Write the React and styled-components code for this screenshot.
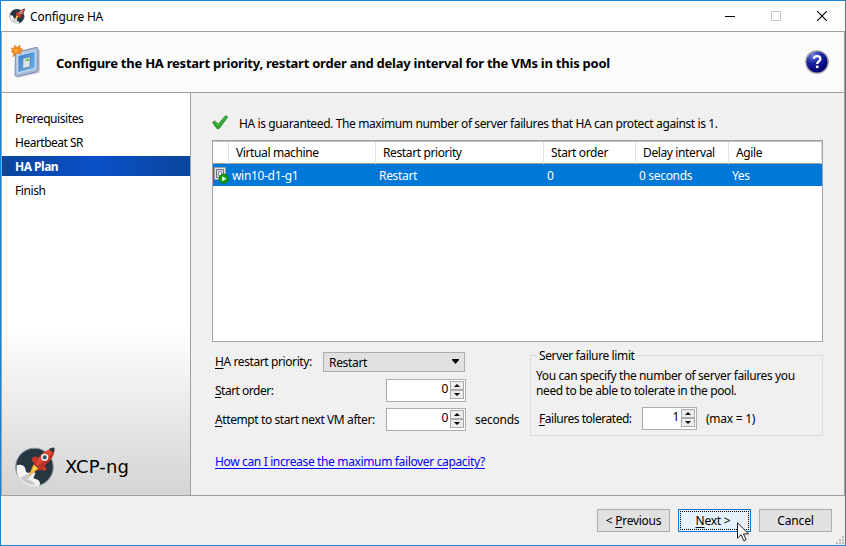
import React from 'react';
import styled, { createGlobalStyle } from 'styled-components';

const GlobalStyle = createGlobalStyle`
  *, *::before, *::after { box-sizing: border-box; }
  body { margin: 0; overflow: hidden; }
`;

const Window = styled.div`
  position: relative;
  display: flex;
  flex-direction: column;
  width: 846px;
  height: 546px;
  border: 1px solid #1883d7;
  background: #f0f0f0;
  color: #000;
  font: 12px/15px "Noto Sans", "Open Sans", sans-serif;
  letter-spacing: -0.385px;
  white-space: nowrap;
`;

const TitleBar = styled.header`
  display: flex;
  align-items: center;
  height: 30px;
  padding-left: 8px;
  background: #fff;
`;

const TitleText = styled.span`
  flex: 1;
  margin-left: 5px;
  letter-spacing: -0.2px;
`;

const WindowButton = styled.span`
  display: flex;
  align-items: center;
  justify-content: center;
  width: 46px;
  height: 28px;
`;

const Frame = styled.div`
  display: flex;
  flex-direction: column;
  width: 844px;
  height: 465px;
  border: 1px solid #a0a0a0;
`;

const Banner = styled.div`
  display: flex;
  align-items: center;
  height: 61px;
  padding: 0 15px 0 9px;
  border-bottom: 1px solid #a0a0a0;
  background: #fbfbfb;
`;

const Heading = styled.h1`
  flex: 1;
  margin: 2px 0 0 12px;
  font-size: 13px;
  font-weight: 700;
  letter-spacing: -0.235px;
`;

const Columns = styled.div`
  display: flex;
  flex: 1;
  min-height: 0;
`;

const Sidebar = styled.nav`
  display: flex;
  flex-direction: column;
  width: 189px;
  padding-top: 15px;
  border-right: 1px solid #a0a0a0;
  background: linear-gradient(#fff 58%, #d4d4d4);
`;

const Step = styled.div`
  height: 20px;
  margin-bottom: 4px;
  padding-left: 13px;
  line-height: 21px;
  letter-spacing: ${(p) => p.$spacing || '-0.42px'};
  font-weight: ${(p) => (p.$active ? 700 : 400)};
  color: ${(p) => (p.$active ? '#fff' : '#000')};
  background: ${(p) =>
    p.$active ? 'linear-gradient(90deg, #0a469d, #0a50c8 50%, #0a469d)' : 'none'};
`;

const Brand = styled.div`
  display: flex;
  align-items: center;
  gap: 10px;
  margin: auto 0 8px 12px;
  font: 18px/24px "DejaVu Sans", sans-serif;
  letter-spacing: 0.1px;
`;

const Main = styled.main`
  flex: 1;
  padding: 21px 20px 0 21px;
`;

const Status = styled.div`
  display: flex;
  align-items: center;
  height: 18px;
  gap: 11px;
  margin-bottom: 8px;
`;

const Table = styled.div`
  width: 611px;
  height: 202px;
  border: 1px solid #a0a3ab;
  border-top-color: #a0a0a0;
  background: #fff;
`;

const TableRow = styled.div`
  display: grid;
  grid-template-columns: 16px 147px 168px 92px 93px 1fr;
`;

const HeadRow = styled(TableRow)`
  height: 23px;
  border-top: 1px solid #c0c0c0;
  border-bottom: 1px solid #a0a0a0;
`;

const HeadCell = styled.div`
  padding-left: 7px;
  border-right: 1px solid #e2e2e2;
  line-height: 22px;
  letter-spacing: -0.38px;
`;

const SelectedRow = styled(TableRow)`
  height: 22px;
  background: #0078d7;
  color: #fff;
`;

const Cell = styled.div`
  display: flex;
  align-items: center;
  padding: ${(p) => (p.$icon ? '0' : '1px 0 0 3px')};
  letter-spacing: -0.32px;
`;

const Controls = styled.div`
  display: flex;
  justify-content: space-between;
  width: 611px;
`;

const Form = styled.div`
  display: flex;
  flex-direction: column;
  padding: 5px 0 0 3px;
`;

const Field = styled.div`
  display: flex;
  align-items: center;
  height: 29px;
`;

const Label = styled.label`
  width: ${(p) => p.$width};
  letter-spacing: ${(p) => p.$spacing || '-0.4px'};
`;

const Key = styled.span`
  text-decoration: underline;
  text-underline-offset: 2px;
`;

const Combo = styled.div`
  display: flex;
  align-items: center;
  justify-content: space-between;
  width: 142px;
  height: 20px;
  padding: 1px 5px 0 5px;
  border: 1px solid #adadad;
  background: #e1e1e1;
  letter-spacing: -0.32px;
`;

const DropArrow = styled.svg`
  margin-top: -2px;
`;

const NumberBox = styled.div`
  display: flex;
  justify-content: flex-end;
  width: ${(p) => p.$width}px;
  height: 23px;
  padding: 1px;
  border: 1px solid #abadb3;
  background: #fff;
`;

const Value = styled.span`
  margin-right: 2px;
  line-height: 15px;
`;

const Spin = styled.span`
  display: grid;
  grid-template-rows: 9px 9px;
  width: 14px;
  height: 18px;
  background: #f0f0f0;
`;

const SpinButton = styled.span`
  display: flex;
  align-items: center;
  justify-content: center;
  border: 1px solid #acacac;
  background: #ececec;
`;

const Unit = styled.span`
  margin-left: 9px;
  letter-spacing: -0.25px;
`;

const Link = styled.a`
  align-self: flex-start;
  margin: 20px 0 0;
  color: #00f;
  text-decoration: underline;
  text-underline-offset: 2px;
  letter-spacing: -0.355px;
`;

const Group = styled.fieldset`
  width: 293px;
  height: 88px;
  min-width: 0;
  margin: 6px 0 0;
  padding: 5px 0 0 5px;
  border: 1px solid #dcdcdc;
`;

const Legend = styled.legend`
  margin-left: 1px;
  padding: 0 2px;
  letter-spacing: -0.38px;
`;

const GroupText = styled.p`
  width: 268px;
  margin: 0 0 9px;
  letter-spacing: -0.385px;
  white-space: normal;
`;

const GroupField = styled.div`
  display: flex;
  align-items: center;
  padding-left: 3px;
`;

const Footer = styled.footer`
  position: relative;
  display: flex;
  justify-content: flex-end;
  gap: 8px;
  flex: 1;
  padding: 13px 13px 0 0;
`;

const Button = styled.button`
  width: 73px;
  height: 23px;
  padding: 0;
  border: 1px solid ${(p) => (p.$focused ? '#0078d7' : '#adadad')};
  outline: ${(p) => (p.$focused ? '1px dotted #000' : 'none')};
  outline-offset: -3px;
  background: ${(p) => (p.$focused ? '#e5f1fb' : '#e1e1e1')};
  color: #000;
  font: inherit;
  letter-spacing: ${(p) => p.$spacing};
  text-indent: ${(p) => (p.$focused ? '-3px' : '0')};
`;

const Pointer = styled.svg`
  position: absolute;
  left: 736px;
  top: 521px;
`;

const Grip = styled.svg`
  position: absolute;
  right: 1px;
  bottom: 1px;
`;

function Rocket({ size }) {
  return (
    <svg width={size} height={size} viewBox="0 0 40 40">
      <circle cx="20" cy="20.500" r="18.300" fill="#263740" stroke="#87919a" strokeWidth="1" />
      <path d="M2.500 19c3-1.500 8 0 8.500 3 .5 2 0 3 2 4 2 .5 5-1 8 0l-2 5c2 2 5 1 6 4 1 2 0 3-1 4-9 2-19-3-21-12-.5-3-.5-6-.5-8z" fill="#f3f3f3" />
      <path d="M6 31l15-7-8 9c4 0 6 2 8 5-7 0-12-3-15-7z" fill="#c9c9cb" />
      <path d="M19 22c0-4 0-9 4-11l4 3zM22 24c4 0 6 0 9-4l-4-4z" fill="#b93227" />
      <path d="M18 11l4-1 .5 3-3 3-2-1zM27 22l3-2 2 3-3 1.500z" fill="#c93b2c" />
      <path d="M19 18l5 4-10 8z" fill="#f5b433" />
      <path d="M20 19l2.500 2.500-5 4z" fill="#ffdc62" />
      <path d="M21 17c3-7 7-12 17-15 1.500 0 1.500 1 1.500 3-2 9-8 13-15.500 17z" fill="#dc4637" />
      <path d="M24 22c7.500-4 13-8 15-16L22.500 20z" fill="#b93228" />
      <path d="M34 3l4-1.500c1 0 1.500.5 1.500 1.500l-1 4z" fill="#263740" />
      <circle cx="30" cy="11" r="2.800" fill="#2d5969" stroke="#f3f3f3" strokeWidth="1.500" />
    </svg>
  );
}

function BannerIcon() {
  return (
    <svg width="33" height="36" viewBox="0 0 33 36">
      <defs>
        <linearGradient id="screen" x2="1" y2="1">
          <stop stopColor="#2f7fd0" />
          <stop offset="1" stopColor="#74b4ea" />
        </linearGradient>
        <linearGradient id="bezel" x2="1" y2="1">
          <stop stopColor="#bccde4" />
          <stop offset="1" stopColor="#a2b5d2" />
        </linearGradient>
      </defs>
      <path d="M6 33l22-5V6" fill="none" stroke="#d0d0d6" strokeWidth="2" />
      <path d="M4.500 8.500L25 3.500q2-.5 2 1.500v20.500q0 2-2 2.500L5.500 32.500q-1.500 0-1.500-2z" fill="url(#bezel)" stroke="#6e82a8" strokeWidth=".9" />
      <path d="M7 11.500L24.200 7.200v17.300L6.800 28.700z" fill="url(#screen)" stroke="#e4eefa" strokeWidth=".8" />
      <path d="M12 14.500l7-1.800v10l-7.200 1.800z" fill="#dde3ea" stroke="#6d7f98" strokeWidth=".7" />
      <path d="M14.500 15.500l3.500-1v2l-3.500 1z" fill="#58c04b" />
      <path d="M0 4l3 .5L3.500 1 6 3.500 9 1v3.500l3 .5-2.500 2 .5 3-4-1-4 4 .5-4.500L0 7.500 2 6z" fill="#f28a1b" stroke="#e07314" strokeWidth=".6" />
      <path d="M3 5.500l4-.5-1 2.500L4 9z" fill="#ffb53c" />
    </svg>
  );
}

function HelpIcon() {
  return (
    <svg width="24" height="24" viewBox="0 0 24 24">
      <defs>
        <radialGradient id="ball" cx=".3" cy=".15" r=".85">
          <stop stopColor="#7185dc" />
          <stop offset=".5" stopColor="#1720a0" />
          <stop offset="1" stopColor="#00006e" />
        </radialGradient>
      </defs>
      <circle cx="12" cy="12" r="11.200" fill="url(#ball)" stroke="#a2a2a2" strokeWidth="1.300" />
      <path d="M8.800 8.800c.2-2 1.500-2.600 3.300-2.600 2 0 3.300 1 3.300 2.800 0 2.300-3.200 2.300-3.200 5" fill="none" stroke="#fff" strokeWidth="2.300" />
      <path d="M10.900 15.600h2.600v2.400h-2.600z" fill="#fff" />
    </svg>
  );
}

function CheckIcon() {
  return (
    <svg width="16" height="16" viewBox="0 0 16 16">
      <path d="M.5 7.500L3 5.800l3.200 3.500L13.500.8l2.200 1.200L7.200 13.500l-2 .2z" fill="#2fa12f" stroke="#1c831f" strokeWidth=".8" />
      <path d="M2 7.300l1-.6 3.200 4L14 1.800" fill="none" stroke="#63c75c" strokeWidth=".8" />
    </svg>
  );
}

function VmIcon() {
  return (
    <svg width="16" height="18" viewBox="0 0 16 18">
      <path d="M1.500 1.500h11v12h-11z" fill="#e1e4e9" stroke="#9a9ea8" />
      <path d="M3.500 3.500h7v8h-7z" fill="#d3d8de" stroke="#6b717c" />
      <path d="M5.500 5.500h3v4h-3z" fill="#eef0f2" stroke="#8a909a" />
      <circle cx="10.700" cy="12.700" r="4.600" fill="#12a012" stroke="#087c08" />
      <path d="M9.200 10.200l4 2.500-4 2.500z" fill="#fff" />
    </svg>
  );
}

function NumberInput({ value, width }) {
  return (
    <NumberBox $width={width}>
      <Value>{value}</Value>
      <Spin>
        <SpinButton>
          <svg width="6" height="3" viewBox="0 0 6 3"><path d="M3 0L6 3H0z" /></svg>
        </SpinButton>
        <SpinButton>
          <svg width="6" height="3" viewBox="0 0 6 3"><path d="M3 3L6 0H0z" /></svg>
        </SpinButton>
      </Spin>
    </NumberBox>
  );
}

export default function App() {
  return (
    <Window>
      <GlobalStyle />
      <TitleBar>
        <Rocket size={16} />
        <TitleText>Configure HA</TitleText>
        <WindowButton>
          <svg width="10" height="10"><path d="M0 5.500h10" stroke="#000" /></svg>
        </WindowButton>
        <WindowButton>
          <svg width="10" height="10"><path d="M.5.5h9v9h-9z" fill="none" stroke="#c8c8c8" /></svg>
        </WindowButton>
        <WindowButton>
          <svg width="10" height="10"><path d="M0 0l10 10M10 0L0 10" stroke="#000" strokeWidth="1.100" /></svg>
        </WindowButton>
      </TitleBar>

      <Frame>
        <Banner>
          <BannerIcon />
          <Heading>
            Configure the HA restart priority, restart order and delay interval for the VMs in this pool
          </Heading>
          <HelpIcon />
        </Banner>
        <Columns>
          <Sidebar>
            <Step>Prerequisites</Step>
            <Step $spacing="-0.5px">Heartbeat SR</Step>
            <Step $active $spacing="-0.5px">HA Plan</Step>
            <Step>Finish</Step>
            <Brand>
              <Rocket size={41} />
              XCP-ng
            </Brand>
          </Sidebar>
          <Main>
            <Status>
              <CheckIcon />
              <span>HA is guaranteed. The maximum number of server failures that HA can protect against is 1.</span>
            </Status>
            <Table>
              <HeadRow>
                <HeadCell />
                <HeadCell>Virtual machine</HeadCell>
                <HeadCell>Restart priority</HeadCell>
                <HeadCell>Start order</HeadCell>
                <HeadCell>Delay interval</HeadCell>
                <HeadCell>Agile</HeadCell>
              </HeadRow>
              <SelectedRow>
                <Cell $icon><VmIcon /></Cell>
                <Cell>win10-d1-g1</Cell>
                <Cell>Restart</Cell>
                <Cell>0</Cell>
                <Cell>0 seconds</Cell>
                <Cell>Yes</Cell>
              </SelectedRow>
            </Table>
            <Controls>
              <Form>
                <Field>
                  <Label $width="108px"><Key>H</Key>A restart priority:</Label>
                  <Combo>
                    Restart
                    <DropArrow width="7" height="5" viewBox="0 0 7 5"><path d="M0 0h7v1L3.500 5 0 1z" /></DropArrow>
                  </Combo>
                </Field>
                <Field>
                  <Label $width="171px" $spacing="-0.5px"><Key>S</Key>tart order:</Label>
                  <NumberInput value="0" width={80} />
                </Field>
                <Field>
                  <Label $width="171px"><Key>A</Key>ttempt to start next VM after:</Label>
                  <NumberInput value="0" width={80} />
                  <Unit>seconds</Unit>
                </Field>
                <Link>How can I increase the maximum failover capacity?</Link>
              </Form>
              <Group>
                <Legend>Server failure limit</Legend>
                <GroupText>
                  You can specify the number of server failures you need to be able to tolerate in the pool.
                </GroupText>
                <GroupField>
                  <Label $width="103px" $spacing="-0.47px"><Key>F</Key>ailures tolerated:</Label>
                  <NumberInput value="1" width={55} />
                  <Unit>(max = 1)</Unit>
                </GroupField>
              </Group>
            </Controls>
          </Main>
        </Columns>
      </Frame>

      <Footer>
        <Button $spacing="-0.28px">&lt; <Key>P</Key>revious</Button>
        <Button $focused $spacing="-0.25px"><Key>N</Key>ext &gt;</Button>
        <Button $spacing="-0.15px">Cancel</Button>
        <Grip width="8" height="8" viewBox="0 0 8 8">
          <path d="M6 0h2v2H6zM3 3h2v2H3zM6 3h2v2H6zM0 6h2v2H0zM3 6h2v2H3zM6 6h2v2H6z" fill="#bdbdbd" />
        </Grip>
      </Footer>
      <Pointer width="13" height="20" viewBox="0 0 13 20">
        <path d="M.5 .8v15.400l3.600-3.500 2.600 6 2.400-1-2.600-5.800h5z" fill="#fff" stroke="#1d1d2b" />
      </Pointer>
    </Window>
  );
}
